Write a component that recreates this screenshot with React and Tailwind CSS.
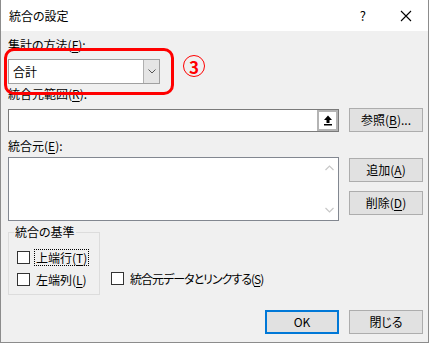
import React from 'react';

const font = { fontFamily: '"Noto Sans CJK JP", "Noto Sans", sans-serif' };

const U = ({ children }) => <span className="underline underline-offset-2">{children}</span>;

const Btn = ({ children, primary }) => (
  <div
    className={`w-[74px] h-[24px] flex items-center justify-center bg-[#e1e1e1] text-[12px] leading-none ${
      primary ? 'border-2 border-[#0078d7]' : 'border border-[#adadad]'
    }`}
  >
    {children}
  </div>
);

const Check = ({ children, focus, tight }) => (
  <div className="flex items-center h-[17px]">
    <div className="w-[13px] h-[13px] border border-[#333] bg-white shrink-0" />
    <div
      className={`ml-[4px] px-[1px] h-[17px] flex items-center ${tight ? 'tracking-[-1px]' : ''} ${
        focus ? 'border border-dotted border-black' : 'border border-transparent'
      }`}
    >
      {children}
    </div>
  </div>
);

export default function App() {
  return (
    <div className="w-[430px] h-[344px] bg-white text-black [font-feature-settings:'palt']" style={font}>
      <div className="w-[429px] h-[343px] flex flex-col border-l border-r border-b border-[#8c8c8c] bg-[#f0f0f0]">
        {/* title bar */}
        <div className="h-[31px] bg-white flex items-center shrink-0">
          <span className="ml-[8px] text-[12px]">統合の設定</span>
          <span className="ml-auto text-[13px] mr-[34px]">?</span>
          <svg width="12" height="12" viewBox="0 0 12 12" className="mr-[16px]">
            <path d="M1 1 L11 11 M11 1 L1 11" stroke="#000" strokeWidth="1.1" />
          </svg>
        </div>

        {/* body */}
        <div className="relative flex-1 flex flex-col pl-[7px] text-[12px]">
          <div className="mt-[6px] h-[16px] leading-[16px]">集計の方法(<U>F</U>):</div>
          <div className="mt-[6px] w-[152px] h-[25px] flex border border-[#a0a0a0] bg-white">
            <div className="flex-1 flex items-center pl-[4px] text-[12px]">合計</div>
            <div className="w-[16px] bg-[#e5e5e5] border-l border-[#b0b0b0] flex items-center justify-center">
              <svg width="8" height="5" viewBox="0 0 8 5">
                <path d="M0.5 0.5 L4 4 L7.5 0.5" stroke="#555" fill="none" strokeWidth="1" />
              </svg>
            </div>
          </div>

          <div className="mt-[2px] h-[16px] leading-[16px]">統合元範囲(<U>R</U>):</div>
          <div className="mt-[6px] flex items-center gap-[10px]">
            <div className="w-[331px] h-[23px] border border-[#7a7a7a] bg-white flex justify-end">
              <div className="w-[21px] h-full border-2 border-[#b4b4b4] bg-white flex items-center justify-center">
                <svg width="10" height="11" viewBox="0 0 10 11">
                  <path d="M5 0.5 L9 5 L6.5 5 L6.5 8 L3.5 8 L3.5 5 L1 5 Z" fill="#000" />
                  <rect x="1" y="9" width="8" height="1.5" fill="#000" />
                </svg>
              </div>
            </div>
            <Btn>参照(<U>B</U>)...</Btn>
          </div>

          <div className="mt-[6px] h-[16px] leading-[16px]">統合元(<U>E</U>):</div>
          <div className="mt-[3px] flex gap-[10px]">
            <div className="w-[331px] h-[64px] border border-[#828790] bg-white flex justify-end">
              <div className="w-[17px] flex flex-col items-center justify-between py-[7px]">
                <svg width="9" height="6" viewBox="0 0 9 6">
                  <path d="M0.5 5 L4.5 1 L8.5 5" stroke="#c8c8c8" fill="none" strokeWidth="1.2" />
                </svg>
                <svg width="9" height="6" viewBox="0 0 9 6">
                  <path d="M0.5 1 L4.5 5 L8.5 1" stroke="#c8c8c8" fill="none" strokeWidth="1.2" />
                </svg>
              </div>
            </div>
            <div className="flex flex-col gap-[9px] pt-[1px]">
              <Btn>追加(<U>A</U>)</Btn>
              <Btn>削除(<U>D</U>)</Btn>
            </div>
          </div>

          <div className="mt-[11px] flex items-end">
            <div className="relative w-[92px] h-[63px] border border-[#dcdcdc] flex flex-col gap-[5px] pl-[8px] pt-[16px]">
              <span className="absolute -top-[9px] left-[5px] px-[1px] bg-[#f0f0f0] leading-[16px]">統合の基準</span>
              <Check focus>上端行(<U>T</U>)</Check>
              <Check>左端列(<U>L</U>)</Check>
            </div>
            <div className="ml-[11px] mb-[8px]">
              <Check tight>統合元データとリンクする(<U>S</U>)</Check>
            </div>
          </div>

          <div className="mt-[15px] flex gap-[10px] pl-[257px]">
            <Btn primary>OK</Btn>
            <Btn>閉じる</Btn>
          </div>

          {/* annotation */}
          <div className="absolute left-[3px] top-[17px] w-[170px] h-[47px] border-[3px] border-[#ff0000] rounded-[10px]" />
          <div className="absolute left-[182px] top-[24px] w-[22px] h-[22px] rounded-full border border-[#ff0000] flex items-center justify-center text-[#ff0000] text-[17px] font-bold leading-none">
            3
          </div>
        </div>
      </div>
    </div>
  );
}
